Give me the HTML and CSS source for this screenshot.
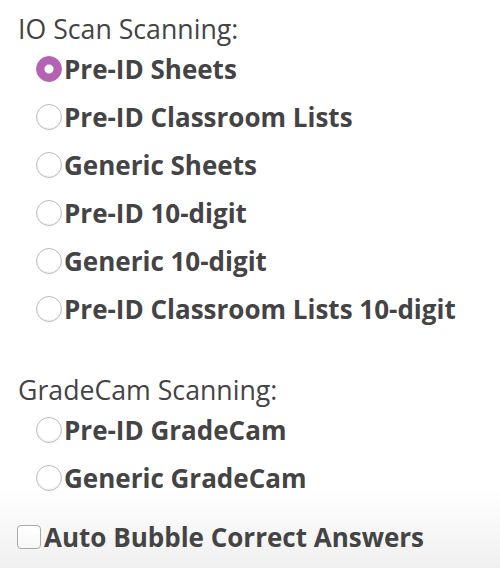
FILE: index.html
```html
<!DOCTYPE html>
<html lang="en">
  <head>
    <meta charset="UTF-8" />
    <meta name="viewport" content="width=device-width, initial-scale=1.0" />
    <title>Scanning Options</title>
    <link rel="stylesheet" href="styles.css">
  </head>
  <body>
    <div class="options">
      <div class="group">
        <div class="group-title">IO Scan Scanning:</div>
        <label class="choice"><input type="radio" name="scan" checked><span>Pre-ID Sheets</span></label>
        <label class="choice"><input type="radio" name="scan"><span>Pre-ID Classroom Lists</span></label>
        <label class="choice"><input type="radio" name="scan"><span>Generic Sheets</span></label>
        <label class="choice"><input type="radio" name="scan"><span>Pre-ID 10-digit</span></label>
        <label class="choice"><input type="radio" name="scan"><span>Generic 10-digit</span></label>
        <label class="choice"><input type="radio" name="scan"><span>Pre-ID Classroom Lists 10-digit</span></label>
      </div>

      <div class="group">
        <div class="group-title">GradeCam Scanning:</div>
        <label class="choice"><input type="radio" name="scan"><span>Pre-ID GradeCam</span></label>
        <label class="choice"><input type="radio" name="scan"><span>Generic GradeCam</span></label>
      </div>
    </div>

    <div class="footer">
      <label class="check"><input type="checkbox"><span>Auto Bubble Correct Answers</span></label>
    </div>
  </body>
</html>
```

FILE: styles.css
```css
html {
  height: 100%;
}

body {
  font-family: "Open Sans", sans-serif;
  color: #444;
  margin: 0;
  min-height: 100%;
  background: linear-gradient(#fff 0, #fff 485px, #f0f0f0 568px);
}

.options {
  padding: 13px 18px 0 18px;
}

.group {
  margin-bottom: 41px;
}

.group:last-child {
  margin-bottom: 0;
}

.group-title {
  font-size: 26.7px;
  line-height: 32px;
}

.choice,
.check {
  display: flex;
  align-items: center;
  font-size: 26px;
  font-weight: bold;
  line-height: 32px;
}

.choice {
  height: 48px;
  padding-left: 18px;
}

.choice input[type="radio"] {
  appearance: none;
  -webkit-appearance: none;
  width: 26px;
  height: 26px;
  margin: 0 2px 0 0;
  border: 1px solid #bdbdbd;
  border-radius: 50%;
  background: #fff;
  box-shadow: inset 0 -1px 2px rgba(0, 0, 0, 0.08);
  flex-shrink: 0;
}

.choice input[type="radio"]:checked {
  border-color: #b462b4;
  background: radial-gradient(circle, #fff 0 4px, #b462b4 5px);
  box-shadow: none;
}

.footer {
  height: 66px;
  padding: 4px 18px 0 17px;
  box-sizing: border-box;
  display: flex;
  align-items: center;
}

.check input[type="checkbox"] {
  appearance: none;
  -webkit-appearance: none;
  width: 24px;
  height: 24px;
  margin: 0 3px 0 0;
  border: 1px solid #aaa;
  border-radius: 4px;
  background: linear-gradient(#fff, #f6f6f6);
  flex-shrink: 0;
}
```
